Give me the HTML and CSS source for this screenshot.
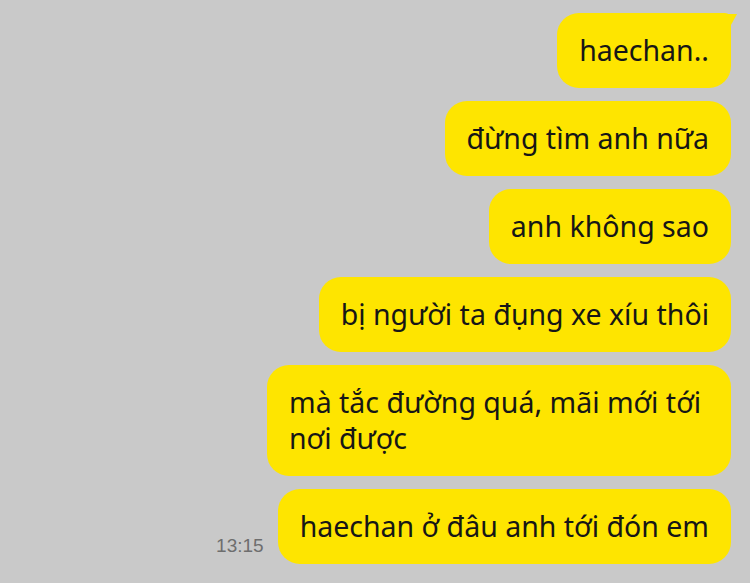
FILE: index.html
```html
<!DOCTYPE html>
<html lang="vi">
<head>
    <meta charset="UTF-8">
    <meta name="viewport" content="width=device-width, initial-scale=1.0">
    <title>Chat</title>
    <link rel="stylesheet" href="styles.css">
</head>
<body>
    <div class="chat">
        <div class="row">
            <div class="bubble first">haechan..</div>
        </div>
        <div class="row">
            <div class="bubble">đừng tìm anh nữa</div>
        </div>
        <div class="row">
            <div class="bubble">anh không sao</div>
        </div>
        <div class="row">
            <div class="bubble">bị người ta đụng xe xíu thôi</div>
        </div>
        <div class="row">
            <div class="bubble">mà tắc đường quá, mãi mới tới nơi được</div>
        </div>
        <div class="row">
            <span class="time">13:15</span>
            <div class="bubble">haechan ở đâu anh tới đón em</div>
        </div>
    </div>
</body>
</html>
```

FILE: styles.css
```css
/* Global styles */
body {
    margin: 0;
    background-color: #c9c9c9;
    font-family: 'Noto Sans', 'Liberation Sans', sans-serif;
    height: 100vh;
    overflow: hidden;
}

.chat {
    display: flex;
    flex-direction: column;
    gap: 13px;
    padding: 13px 19px 0 0;
}

.row {
    display: flex;
    justify-content: flex-end;
    align-items: flex-end;
    gap: 14px;
}

.bubble {
    position: relative;
    background-color: #fee500;
    color: #161616;
    font-size: 28.5px;
    line-height: 36px;
    padding: 19px 22px 20px 22px;
    border-radius: 22px;
    max-width: 420px;
}

/* little tail on the first message */
.bubble.first {
    border-top-right-radius: 6px;
}

.bubble.first::after {
    content: "";
    position: absolute;
    top: 1px;
    right: -6px;
    width: 12px;
    height: 12px;
    background-color: #fee500;
    clip-path: polygon(0 0, 100% 0, 45% 100%, 0 100%);
}

.time {
    font-size: 19px;
    color: #6e6e6e;
    padding-bottom: 7px;
    font-family: 'Liberation Sans', sans-serif;
}
```
